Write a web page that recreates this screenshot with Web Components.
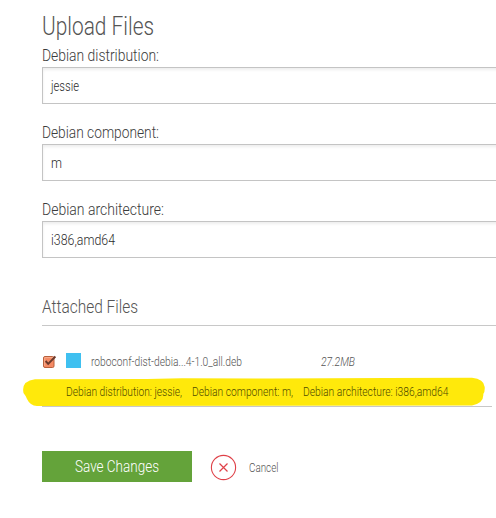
<!DOCTYPE html>
<html lang="en">
<head>
<meta charset="utf-8">
<title>Upload Files</title>
<style>
html, body { margin: 0; background: #fff; }
body { height: 518px; overflow: hidden; font-family: Roboto, "Open Sans", sans-serif; color: #555; }
</style>
</head>
<body>
<upload-page></upload-page>
<script>
// Condenses one line of text to the width given in its attribute.
class FitText extends HTMLElement {
  connectedCallback() {
    const root = this.attachShadow({ mode: 'open' });
    const w = +this.getAttribute('width');
    root.innerHTML = `<style>
      :host { display: block; flex: none; width: ${w}px; white-space: nowrap; }
      span { display: inline-block; transform-origin: 0 50%; vertical-align: top; }
    </style><span><slot></slot></span>`;
    const span = root.querySelector('span');
    span.style.transform = `scaleX(${w / span.getBoundingClientRect().width})`;
  }
}

class TextField extends HTMLElement {
  connectedCallback() {
    const a = n => this.getAttribute(n);
    this.attachShadow({ mode: 'open' }).innerHTML = `<style>
      :host { display: block; margin-bottom: 17px; }
      .label { font-size: 17px; line-height: 22px; font-weight: 300; color: #3c3c3c; margin-bottom: 1px; }
      .box { box-sizing: border-box; height: 37px; margin-right: -10px; padding-left: 8px; border: 1px solid #c4c4c4;
        box-shadow: inset 0 2px 3px #eee; font-size: 15px; line-height: 37px; font-weight: 300; color: #2c2c2c; }
    </style>
    <div class="label"><fit-text width="${a('label-width')}">${a('label')}</fit-text></div>
    <div class="box"><fit-text width="${a('value-width')}">${a('value')}</fit-text></div>`;
  }
}

class CheckMark extends HTMLElement {
  connectedCallback() {
    this.attachShadow({ mode: 'open' }).innerHTML = `<style>
      :host { display: block; flex: none; width: 15px; height: 15px; } svg { display: block; }
    </style>
    <svg width="15" height="15" viewBox="0 0 15 15">
      <rect x="1.5" y="3.5" width="10.500" height="11" rx="1.5" fill="#f58a64" stroke="#b8603c"/>
      <path d="M2.7 13V4.6H11" fill="none" stroke="#f9b598" stroke-width=".8"/>
      <path d="M3.6 8L6.2 10.900L13.400 3.500" fill="none" stroke="#6b3a2c" stroke-width="1.900"/>
    </svg>`;
  }
}

class AttachedFile extends HTMLElement {
  connectedCallback() {
    this.attachShadow({ mode: 'open' }).innerHTML = `<style>
      :host { display: block; width: 450px; border-bottom: 1px solid #c8c8c8; font-size: 13px; }
      .row { display: flex; height: 15px; padding-bottom: 10px; color: #555; font-weight: 300; }
      check-mark { margin-right: 9px; }
      .kind { flex: none; width: 15px; height: 15px; background: #3fc0f0; margin-right: 10px; }
      .row fit-text { line-height: 18px; }
      .size { font-style: italic; margin-left: 79px; }
      .meta { position: relative; isolation: isolate; display: flex; gap: 10px; height: 28px; line-height: 28px; padding-left: 24px; }
      .marker { position: absolute; left: -20px; top: -1px; z-index: -1; }
      .meta fit-text { font-weight: 300; color: #4f4b00; }
    </style>
    <div class="row"><check-mark></check-mark><div class="kind"></div>
      <fit-text width="151">roboconf-dist-debia...4-1.0_all.deb</fit-text>
      <fit-text class="size" width="34">27.2MB</fit-text></div>
    <div class="meta">
      <svg class="marker" width="465" height="29" viewBox="0 0 465 29">
        <path d="M13 2.2L125 2L160 1.2L250 1.5L365 1L450 .8Q462 2 462.700 10Q463 15 461.300 17Q462 26 450 28.500L15 29Q8 28.500 5 22Q4 19 1.500 16Q-1 4 13 2.200Z" fill="#ffe90b"/>
      </svg>
      <fit-text width="116">Debian distribution: jessie,</fit-text>
      <fit-text width="101">Debian component: m,</fit-text>
      <fit-text width="145.5">Debian architecture: i386,amd64</fit-text>
    </div>`;
  }
}

class FormActions extends HTMLElement {
  connectedCallback() {
    this.attachShadow({ mode: 'open' }).innerHTML = `<style>
      :host { display: flex; height: 31px; }
      .save { display: flex; justify-content: center; width: 150px; margin-right: 18px; background: #64a33a; color: #fff;
        font-size: 17px; line-height: 31px; font-weight: 300; }
      svg { display: block; margin: 3px 12px 0 0; }
      .cancel { font-size: 13px; line-height: 33px; font-weight: 300; color: #555; }
    </style>
    <div class="save"><fit-text width="84">Save Changes</fit-text></div>
    <svg width="27" height="27" viewBox="0 0 27 27" fill="none" stroke="#df4148">
      <circle cx="13.500" cy="13.500" r="12.100" stroke-width="1.100"/>
      <path d="M9.500 9.500L17.500 17.500M17.500 9.500L9.500 17.500" stroke-width="1.200"/>
    </svg>
    <fit-text class="cancel" width="29.5">Cancel</fit-text>`;
  }
}

class UploadPage extends HTMLElement {
  connectedCallback() {
    this.attachShadow({ mode: 'open' }).innerHTML = `<style>
      :host { display: block; padding: 12px 0 0 42px; }
      h1, h2 { margin: 0; font-weight: 300; color: #555; }
      h1 { font-size: 25px; line-height: 30px; margin-bottom: 2px; }
      h2 { font-size: 19px; line-height: 24px; margin-top: 37px; padding-bottom: 6px; border-bottom: 1px solid #c8c8c8; margin-bottom: 27px; }
      form-actions { margin-top: 44px; }
    </style>
    <h1><fit-text width="112">Upload Files</fit-text></h1>
    <text-field label="Debian distribution:" label-width="117" value="jessie" value-width="28"></text-field>
    <text-field label="Debian component:" label-width="117" value="m" value-width="11"></text-field>
    <text-field label="Debian architecture:" label-width="122" value="i386,amd64" value-width="64"></text-field>
    <h2><fit-text width="96">Attached Files</fit-text></h2>
    <attached-file></attached-file>
    <form-actions></form-actions>`;
  }
}

customElements.define('fit-text', FitText);
customElements.define('text-field', TextField);
customElements.define('check-mark', CheckMark);
customElements.define('attached-file', AttachedFile);
customElements.define('form-actions', FormActions);
customElements.define('upload-page', UploadPage);
</script>
</body>
</html>
